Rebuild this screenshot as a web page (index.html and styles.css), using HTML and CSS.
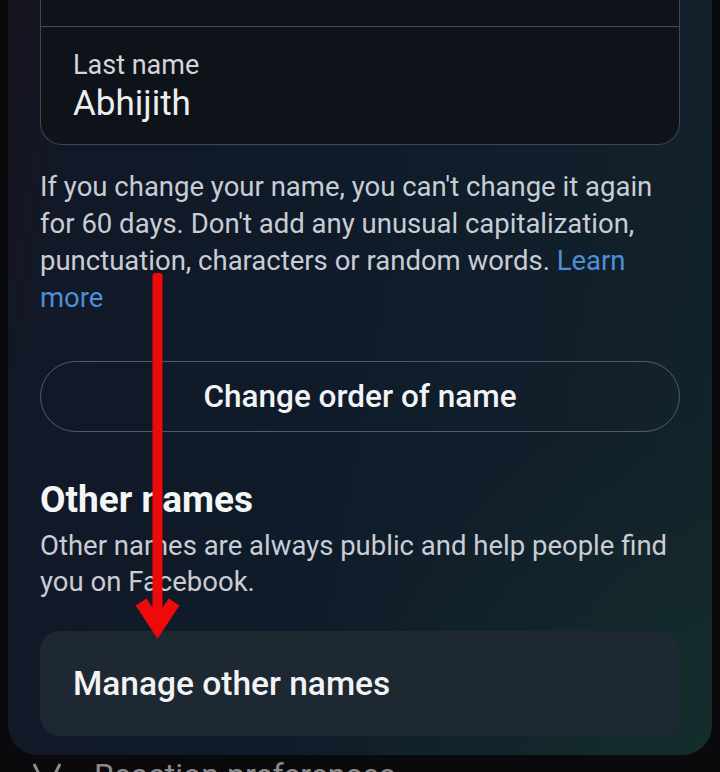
FILE: index.html
```html
<!DOCTYPE html>
<html>
<head>
<meta charset="utf-8">
<link rel="stylesheet" href="styles.css">
</head>
<body>
<div class="screen">
  <div class="panel">
    <div class="field">
      <div class="field-row first"></div>
      <div class="field-row second">
        <div class="label">Last name</div>
        <div class="value">Abhijith</div>
      </div>
    </div>
    <p class="note">If you change your name, you can't change it again for 60 days. Don't add any unusual capitalization, punctuation, characters or random words. <span class="link">Learn more</span></p>
    <div class="outline-btn">Change order of name</div>
    <h2 class="heading">Other names</h2>
    <p class="desc">Other names are always public and help people find you on Facebook.</p>
    <div class="manage">Manage other names</div>
  </div>
  <div class="below">
    <svg class="below-icon" width="34" height="30" viewBox="0 0 34 30"><path d="M4 4 L12 20 M30 4 L22 20 M12 20 L22 20" stroke="#8a8a8a" stroke-width="3" fill="none"/></svg>
    <span class="below-text">Reaction preferences</span>
  </div>
  <svg class="arrow" width="80" height="390" viewBox="0 0 80 390">
    <rect x="32.5" y="8" width="10" height="350" rx="3" fill="#ee0a0a"/>
    <polyline points="21,337 37.5,362 54,337" fill="none" stroke="#ee0a0a" stroke-width="13" stroke-linejoin="miter" stroke-miterlimit="10"/>
  </svg>
</div>
</body>
</html>
```
FILE: styles.css
```css
html, body {
  margin: 0;
  padding: 0;
  background: #0a0a0c;
}
body {
  font-family: Roboto, "Noto Sans", sans-serif;
  width: 720px;
  height: 772px;
  overflow: hidden;
}
.screen {
  position: relative;
  width: 720px;
  height: 772px;
  overflow: hidden;
}
.panel {
  margin: 0 8px;
  height: 755px;
  box-sizing: border-box;
  padding: 0 32px;
  border-radius: 0 0 30px 30px;
  background:
    radial-gradient(ellipse 60% 45% at 100% 100%, rgba(22, 52, 44, 0.55), rgba(22, 52, 44, 0) 100%),
    linear-gradient(100deg, #18141f 0%, #121827 10%, #0f1b2a 45%, #111f2b 75%, #13242a 100%);
  display: flex;
  flex-direction: column;
}
.field {
  border: 1.5px solid #3b4958;
  border-top: none;
  border-radius: 0 0 22px 22px;
  background: #0e1219;
  display: flex;
  flex-direction: column;
}
.field-row.first {
  height: 26px;
  border-bottom: 1.5px solid #3e4d5c;
}
.field-row.second {
  height: 117px;
  box-sizing: border-box;
  padding: 20px 0 0 32px;
}
.label {
  color: #d2d5da;
  font-size: 27px;
  line-height: 36px;
}
.value {
  color: #eceef0;
  font-size: 35px;
  line-height: 42px;
  font-weight: 400;
}
.note {
  margin: 23px 0 0 0;
  color: #c9cdd3;
  font-size: 27.5px;
  line-height: 37px;
}
.link {
  color: #4d8fd6;
}
.outline-btn {
  margin-top: 45px;
  height: 71px;
  box-sizing: border-box;
  border: 1.5px solid #4e5d6a;
  border-radius: 36px;
  display: flex;
  align-items: center;
  justify-content: center;
  color: #f2f3f5;
  font-size: 31.5px;
  font-weight: 500;
}
.heading {
  margin: 48px 0 0 0;
  color: #f4f5f6;
  font-size: 37px;
  line-height: 40px;
  font-weight: 700;
}
.desc {
  margin: 8px 0 0 0;
  color: #c9cdd3;
  font-size: 27.5px;
  line-height: 36px;
}
.manage {
  margin-top: 31px;
  height: 105px;
  box-sizing: border-box;
  padding-left: 33px;
  border-radius: 20px;
  background: #1e2832;
  display: flex;
  align-items: center;
  color: #f2f3f5;
  font-size: 33.5px;
  font-weight: 500;
}
.below {
  display: flex;
  align-items: flex-start;
  gap: 30px;
  padding-left: 30px;
  margin-top: 5px;
  height: 12px;
  overflow: hidden;
}
.below-text {
  color: #8a8a8c;
  font-size: 32px;
  line-height: 30px;
}
.arrow {
  position: absolute;
  left: 120px;
  top: 265px;
}
```
